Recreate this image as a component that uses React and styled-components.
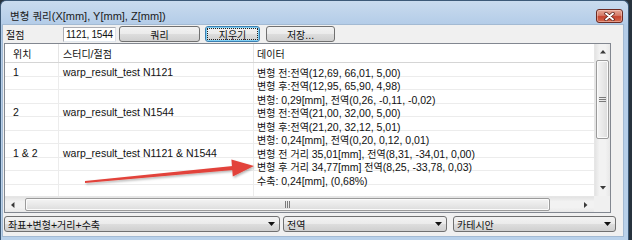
import React from 'react';
import styled, { createGlobalStyle, css } from 'styled-components';

const Global = createGlobalStyle`
  html, body { margin: 0; padding: 0; background: #27323d; }
  body {
    width: 632px; height: 240px; overflow: hidden;
    font-family: "Liberation Sans", "Noto Sans CJK KR", sans-serif;
    font-size: 10.5px; color: #111;
  }
  * { box-sizing: border-box; }
`;

const Ko = styled.span`
  font-family: "Noto Sans CJK KR", sans-serif;
  font-size: 10px;
`;

const Txt = styled.span`
  white-space: pre;
`;

const KO = /([\u1100-\u11ff\u3130-\u318f\uac00-\ud7af]+)/;
const T = ({ children }) => (
  <Txt>
    {String(children)
      .split(KO)
      .map((s, i) => (i % 2 ? <Ko key={i}>{s}</Ko> : s))}
  </Txt>
);

const Window = styled.div`
  position: relative;
  width: 629px;
  height: 240px;
  border: 1px solid #3d5a78;
  border-bottom: none;
  border-radius: 6px 6px 0 0;
  background: linear-gradient(180deg, #c9dbee 0px, #b3cce8 24px, #b9d1ea 100%);
  display: flex;
  flex-direction: column;
  padding: 0 5px 4px 2px;
`;

const TitleBar = styled.div`
  height: 24px;
  display: flex;
  align-items: flex-start;
  justify-content: space-between;
  padding: 7px 0 0 7px;
`;

const Title = styled.div`
  line-height: 15px;
  font-size: 11px;
  color: #1b1b1b;
  ${Ko} { font-size: 10.5px; }
`;

const Close = styled.div`
  width: 27px;
  height: 14px;
  margin-top: 1px;
  border: 1px solid #6b2a22;
  border-radius: 3px;
  background: linear-gradient(180deg, #e6a897 0%, #d57b69 45%, #c5442f 55%, #d36a4f 100%);
  box-shadow: inset 0 0 0 1px rgba(255, 220, 210, 0.45);
  display: flex;
  align-items: center;
  justify-content: center;
`;

const Client = styled.div`
  flex: 1;
  background: #f0f0f0;
  box-shadow: 0 0 0 1px #a3bad3;
  display: flex;
  flex-direction: column;
  padding: 1px 0 0 1px;
`;

const Toolbar = styled.div`
  height: 16px;
  display: flex;
  align-items: center;
`;

const Label = styled.div`
  width: 59px;
  padding-left: 2px;
`;

const Input = styled.div`
  width: 53px;
  height: 15px;
  background: #fff;
  border: 1px solid #abadb3;
  border-bottom-color: #e3e9ef;
  border-right-color: #dbdfe6;
  display: flex;
  align-items: center;
  padding-left: 2px;
  font-size: 10px;
  letter-spacing: -0.25px;
  white-space: nowrap;
  overflow: hidden;
`;

const Btn = styled.div`
  width: ${(p) => p.$w}px;
  height: 16px;
  margin-left: ${(p) => p.$ml}px;
  border: 1px solid #707070;
  border-radius: 3px;
  background: linear-gradient(180deg, #f2f2f2 0%, #ebebeb 48%, #dddddd 52%, #cfcfcf 100%);
  display: flex;
  align-items: center;
  justify-content: center;
  padding: 1px;
  ${(p) =>
    p.$focus &&
    css`
      border-color: #3c7fb1;
      box-shadow: inset 0 0 0 1px #7fd0f5;
    `}
`;

const FocusRect = styled.div`
  flex: 1;
  align-self: stretch;
  margin: 1px;
  outline: 1px dotted #222;
  display: flex;
  align-items: center;
  justify-content: center;
`;

const List = styled.div`
  width: 607px;
  height: 170px;
  margin-top: 1px;
  border: 1px solid #828790;
  background: #fff;
  display: grid;
  grid-template-columns: 1fr 16px;
  grid-template-rows: 1fr 16px;
  overflow: hidden;
`;

const Table = styled.div`
  overflow: hidden;
  display: flex;
  flex-direction: column;
`;

const Row = styled.div`
  display: grid;
  grid-template-columns: 54px 195px 1fr;
  height: ${(p) => (p.$head ? 19 : 13.5)}px;
  flex: none;
  border-bottom: 1px solid ${(p) => (p.$head ? '#d5d5d5' : '#ececec')};
`;

const Cell = styled.div`
  display: flex;
  align-items: flex-start;
  padding-left: ${(p) => p.$pad}px;
  padding-top: 2.5px;
  border-right: 1px solid ${(p) => (p.$head ? '#e5e5e5' : '#ececec')};
  white-space: nowrap;
  line-height: 13px;
  &:last-child { border-right: none; }
`;

const VScroll = styled.div`
  background: linear-gradient(90deg, #e3e3e3, #f2f2f2 30%, #f2f2f2 70%, #e8e8e8);
  display: flex;
  flex-direction: column;
  align-items: center;
  border-left: 1px solid #e6e6e6;
`;

const HScroll = styled.div`
  background: linear-gradient(180deg, #e3e3e3, #f2f2f2 30%, #f2f2f2 70%, #e8e8e8);
  display: flex;
  align-items: center;
  border-top: 1px solid #e6e6e6;
`;

const Corner = styled.div`
  background: #f0f0f0;
`;

const ArrowBox = styled.div`
  width: 16px;
  height: 16px;
  flex: none;
  display: flex;
  align-items: center;
  justify-content: center;
`;

const Thumb = styled.div`
  border: 1px solid #9b9b9b;
  border-radius: 2px;
  display: flex;
  align-items: center;
  justify-content: center;
  ${(p) =>
    p.$v
      ? css`
          width: 13px;
          height: 79px;
          background: linear-gradient(90deg, #f4f4f4, #e9e9e9 50%, #dcdcdc);
        `
      : css`
          height: 13px;
          width: 525px;
          margin-left: 4px;
          background: linear-gradient(180deg, #f4f4f4, #e9e9e9 50%, #dcdcdc);
        `}
  box-shadow: inset 0 0 0 1px #fbfbfb;
`;

const Spacer = styled.div`
  flex: 1;
`;

const ComboRow = styled.div`
  display: flex;
  margin-top: 3px;
  height: 16px;
`;

const Combo = styled.div`
  width: ${(p) => p.$w}px;
  margin-left: ${(p) => p.$ml}px;
  height: 16px;
  border: 1px solid #707070;
  border-radius: 3px;
  background: linear-gradient(180deg, #f2f2f2 0%, #ebebeb 48%, #dddddd 52%, #cfcfcf 100%);
  display: flex;
  align-items: center;
  padding: 0 4px 0 3px;
  white-space: nowrap;
`;

const Overlay = styled.svg`
  position: absolute;
  left: 0;
  top: 0;
  pointer-events: none;
`;

const Tri = ({ dir = 'down', size = 7, color = '#111' }) => {
  const pts = {
    down: '0,0 7,0 3.5,4',
    up: '0,4 7,4 3.5,0',
    left: '4,0 4,7 0,3.5',
    right: '0,0 0,7 4,3.5',
  }[dir];
  const w = dir === 'left' || dir === 'right' ? 4 : 7;
  const h = dir === 'left' || dir === 'right' ? 7 : 4;
  return (
    <svg width={(w * size) / 7} height={(h * size) / 7} viewBox={`0 0 ${w} ${h}`}>
      <polygon points={pts} fill={color} />
    </svg>
  );
};

const rows = [
  ['1', 'warp_result_test N1121', '변형 전:전역(12,69, 66,01, 5,00)'],
  ['', '', '변형 후:전역(12,95, 65,90, 4,98)'],
  ['', '', '변형: 0,29[mm], 전역(0,26, -0,11, -0,02)'],
  ['2', 'warp_result_test N1544', '변형 전:전역(21,00, 32,00, 5,00)'],
  ['', '', '변형 후:전역(21,20, 32,12, 5,01)'],
  ['', '', '변형: 0,24[mm], 전역(0,20, 0,12, 0,01)'],
  ['1 & 2', 'warp_result_test N1121 & N1544', '변형 전 거리 35,01[mm], 전역(8,31, -34,01, 0,00)'],
  ['', '', '변형 후 거리 34,77[mm] 전역(8,25, -33,78, 0,03)'],
  ['', '', '수축: 0,24[mm], (0,68%)'],
  ['', '', ''],
];

export default function App() {
  return (
    <>
      <Global />
      <Window>
        <TitleBar>
          <Title>
            <T>변형 쿼리(X[mm], Y[mm], Z[mm])</T>
          </Title>
          <Close>
            <svg width="11" height="9" viewBox="0 0 11 9">
              <path d="M2 1.5 L9 7.5 M9 1.5 L2 7.5" stroke="#5a1f18" strokeWidth="3.4" strokeLinecap="round" />
              <path d="M2 1.5 L9 7.5 M9 1.5 L2 7.5" stroke="#fff" strokeWidth="1.9" strokeLinecap="round" />
            </svg>
          </Close>
        </TitleBar>
        <Client>
          <Toolbar>
            <Label>
              <T>절점</T>
            </Label>
            <Input>1121, 1544</Input>
            <Btn $w={81} $ml={3}>
              <T>쿼리</T>
            </Btn>
            <Btn $w={55} $ml={5} $focus>
              <FocusRect>
                <T>지우기</T>
              </FocusRect>
            </Btn>
            <Btn $w={69} $ml={6}>
              <T>저장...</T>
            </Btn>
          </Toolbar>
          <List>
            <Table>
              <Row $head>
                <Cell $head $pad={8}>
                  <T>위치</T>
                </Cell>
                <Cell $head $pad={4}>
                  <T>스터디/절점</T>
                </Cell>
                <Cell $head $pad={3}>
                  <T>데이터</T>
                </Cell>
              </Row>
              {rows.map((r, i) => (
                <Row key={i}>
                  <Cell $pad={8}>
                    <Txt>{r[0]}</Txt>
                  </Cell>
                  <Cell $pad={4}>
                    <Txt>{r[1]}</Txt>
                  </Cell>
                  <Cell $pad={3}>
                    <T>{r[2]}</T>
                  </Cell>
                </Row>
              ))}
            </Table>
            <VScroll>
              <ArrowBox>
                <Tri dir="up" size={6} color="#3a3a3a" />
              </ArrowBox>
              <Thumb $v>
                <svg width="7" height="5" viewBox="0 0 7 5">
                  <path d="M0 0.5H7M0 2.5H7M0 4.5H7" stroke="#7a7a7a" strokeWidth="1" />
                </svg>
              </Thumb>
              <Spacer />
              <ArrowBox>
                <Tri dir="down" size={6} color="#3a3a3a" />
              </ArrowBox>
            </VScroll>
            <HScroll>
              <ArrowBox>
                <Tri dir="left" size={6} color="#3a3a3a" />
              </ArrowBox>
              <Thumb>
                <svg width="5" height="7" viewBox="0 0 5 7">
                  <path d="M0.5 0V7M2.5 0V7M4.5 0V7" stroke="#7a7a7a" strokeWidth="1" />
                </svg>
              </Thumb>
              <Spacer />
              <ArrowBox>
                <Tri dir="right" size={6} color="#3a3a3a" />
              </ArrowBox>
            </HScroll>
            <Corner />
          </List>
          <ComboRow>
            <Combo $w={276} $ml={0}>
              <T>좌표+변형+거리+수축</T>
              <Spacer />
              <Tri />
            </Combo>
            <Combo $w={164} $ml={3}>
              <T>전역</T>
              <Spacer />
              <Tri />
            </Combo>
            <Combo $w={163} $ml={6}>
              <T>카테시안</T>
              <Spacer />
              <Tri />
            </Combo>
          </ComboRow>
        </Client>
        <Overlay width="632" height="240" viewBox="0 0 632 240">
          <defs>
            <filter id="sh" x="-10%" y="-50%" width="120%" height="200%">
              <feDropShadow dx="1" dy="1.5" stdDeviation="1" floodColor="#000" floodOpacity="0.3" />
            </filter>
          </defs>
          <g filter="url(#sh)" fill="#e2433a">
            <polygon points="84,182 84,180 231.8,165 232.2,169" />
            <polygon points="253,165 230.4,158.6 231.8,175.4" />
          </g>
        </Overlay>
      </Window>
    </>
  );
}
